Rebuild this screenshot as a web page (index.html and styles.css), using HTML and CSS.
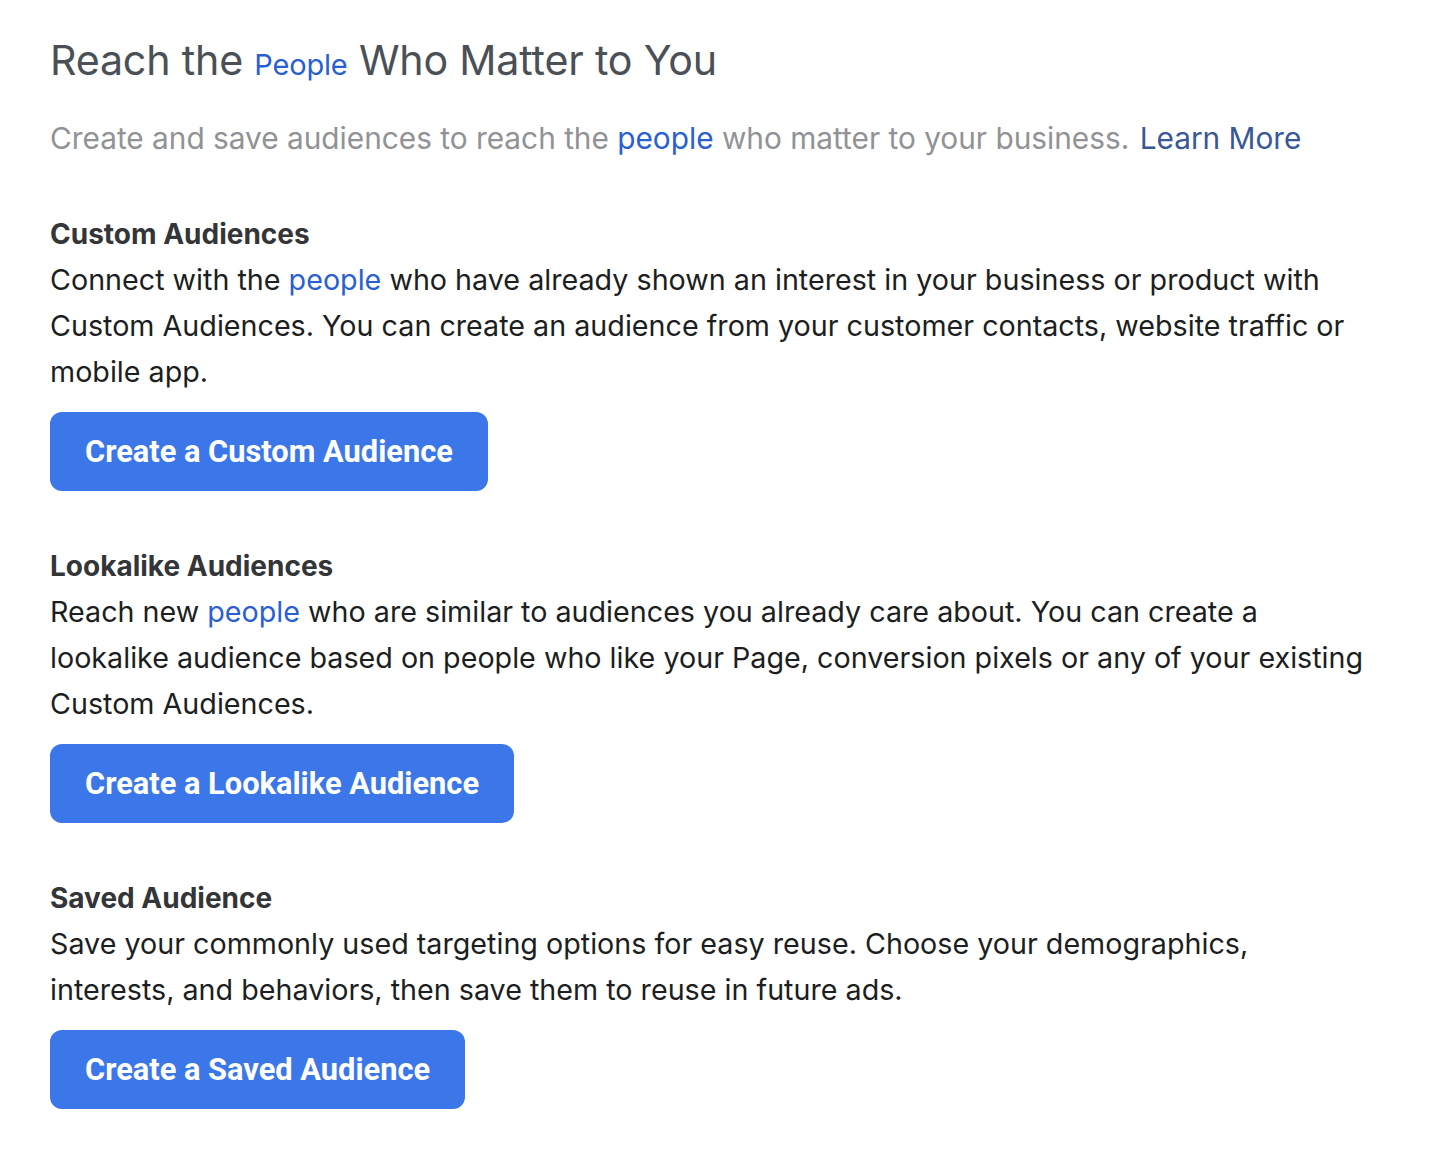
FILE: index.html
```html
<!DOCTYPE html>
<html>
<head>
<meta charset="utf-8">
<link rel="stylesheet" href="styles.css">
</head>
<body>
<main class="page">
  <h1 class="title">Reach the <span class="title-link">People</span> Who Matter to You</h1>
  <p class="intro">Create and save audiences to reach the <a class="link">people</a> who matter to your business. <a class="learn">Learn More</a></p>

  <section class="block">
    <h2 class="block-title">Custom Audiences</h2>
    <p class="block-text">Connect with the <a class="link">people</a> who have already shown an interest in your business or product with Custom Audiences. You can create an audience from your customer contacts, website traffic or mobile app.</p>
    <button class="btn">Create a Custom Audience</button>
  </section>

  <section class="block">
    <h2 class="block-title">Lookalike Audiences</h2>
    <p class="block-text">Reach new <a class="link">people</a> who are similar to audiences you already care about. You can create a lookalike audience based on people who like your Page, conversion pixels or any of your existing Custom Audiences.</p>
    <button class="btn">Create a Lookalike Audience</button>
  </section>

  <section class="block">
    <h2 class="block-title">Saved Audience</h2>
    <p class="block-text">Save your commonly used targeting options for easy reuse. Choose your demographics, interests, and behaviors, then save them to reuse in future ads.</p>
    <button class="btn">Create a Saved Audience</button>
  </section>
</main>
</body>
</html>
```

FILE: styles.css
```css
html, body {
  margin: 0;
  padding: 0;
  background: #ffffff;
}
body {
  font-family: "Inter", "Roboto", "Liberation Sans", sans-serif;
  color: #1c1e21;
}
.page {
  padding: 34px 50px 40px 50px;
  width: 1322px;
}
.title {
  margin: 0;
  font-size: 41.2px;
  font-weight: 400;
  line-height: 52px;
  color: #4b4f56;
  letter-spacing: -0.2px;
}
.title-link {
  font-size: 29px;
  color: #2a5fd2;
}
.intro {
  margin: 27px 0 0 0;
  font-size: 29.8px;
  line-height: 40px;
  color: #909296;
}
.link {
  color: #2a5fd2;
}
.learn {
  color: #385898;
  margin-left: 2px;
}
.block {
  margin-top: 56px;
}
.block + .block {
  margin-top: 55px;
}
.block-title {
  margin: 0;
  font-size: 28px;
  font-weight: 700;
  line-height: 40px;
  color: #333538;
}
.block-text {
  margin: 3px 0 0 0;
  font-size: 28.7px;
  line-height: 46px;
  color: #1c1e21;
}
.btn {
  display: block;
  margin-top: 17px;
  height: 79px;
  padding: 0 35px;
  border: none;
  border-radius: 12px;
  background: #3b77e8;
  color: #ffffff;
  font-family: "Roboto", "Liberation Sans", sans-serif;
  font-weight: 700;
  font-size: 30.8px;
}
```
